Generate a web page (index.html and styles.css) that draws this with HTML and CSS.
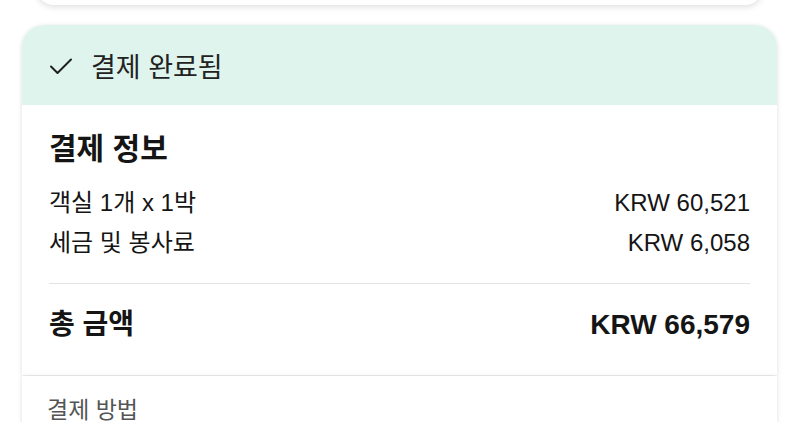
FILE: index.html
```html
<!DOCTYPE html>
<html lang="ko">
<head>
  <meta charset="UTF-8" />
  <title>결제 정보</title>
  <link rel="stylesheet" href="styles.css">
</head>
<body>
  <div class="page">
    <div class="prev-card"></div>

    <div class="card">
      <div class="status">
        <svg class="check" width="24" height="24" viewBox="0 0 24 24" fill="none" stroke="#1f1f1f" stroke-width="2" stroke-linecap="round" stroke-linejoin="round">
          <path d="M2 12.5l6.5 6.5L22 5.5" />
        </svg>
        <span>결제 완료됨</span>
      </div>

      <div class="info">
        <h2 class="info-title">결제 정보</h2>
        <div class="row">
          <span>객실 1개 x 1박</span>
          <span>KRW 60,521</span>
        </div>
        <div class="row">
          <span>세금 및 봉사료</span>
          <span>KRW 6,058</span>
        </div>
        <div class="divider"></div>
        <div class="row total">
          <span>총 금액</span>
          <span>KRW 66,579</span>
        </div>
      </div>
    </div>

    <div class="card next-card">
      <div class="method">결제 방법</div>
    </div>
  </div>
</body>
</html>
```

FILE: styles.css
```css
body {
  margin: 0;
  background: #fff;
  font-family: "Liberation Sans", "Noto Sans CJK KR", sans-serif;
  color: #151515;
}
.page {
  padding: 0 23px 0 22px;
}
.prev-card {
  height: 30px;
  margin: -25px 14px 0;
  background: #fff;
  border-radius: 0 0 18px 18px;
  box-shadow: 0 2px 6px rgba(0,0,0,0.13);
}
.card {
  margin-top: 20px;
  background: #fff;
  border-radius: 22px 22px 0 0;
  box-shadow: 0 1px 5px rgba(0,0,0,0.13);
  overflow: hidden;
}
.status {
  height: 80px;
  background: #def4ec;
  display: flex;
  align-items: center;
  gap: 18px;
  padding: 0 27px;
  font-size: 27px;
  color: #222;
}
.check {
  display: block;
  margin-top: 1px;
}
.info {
  padding: 22px 27px 30px;
}
.info-title {
  margin: 0 0 12px;
  font-size: 30px;
  line-height: 44px;
  font-weight: 600;
}
.row {
  display: flex;
  justify-content: space-between;
  align-items: center;
  font-size: 24px;
  line-height: 40px;
}
.divider {
  height: 1px;
  background: #e3e3e3;
  margin: 20px 0 21px;
}
.row.total {
  font-size: 28px;
  font-weight: bold;
}
.next-card {
  margin-top: 1px;
  border-radius: 0;
  padding: 22px 25px 0;
  height: 40px;
}
.method {
  font-size: 23px;
  line-height: 24px;
  color: #555;
}
```
